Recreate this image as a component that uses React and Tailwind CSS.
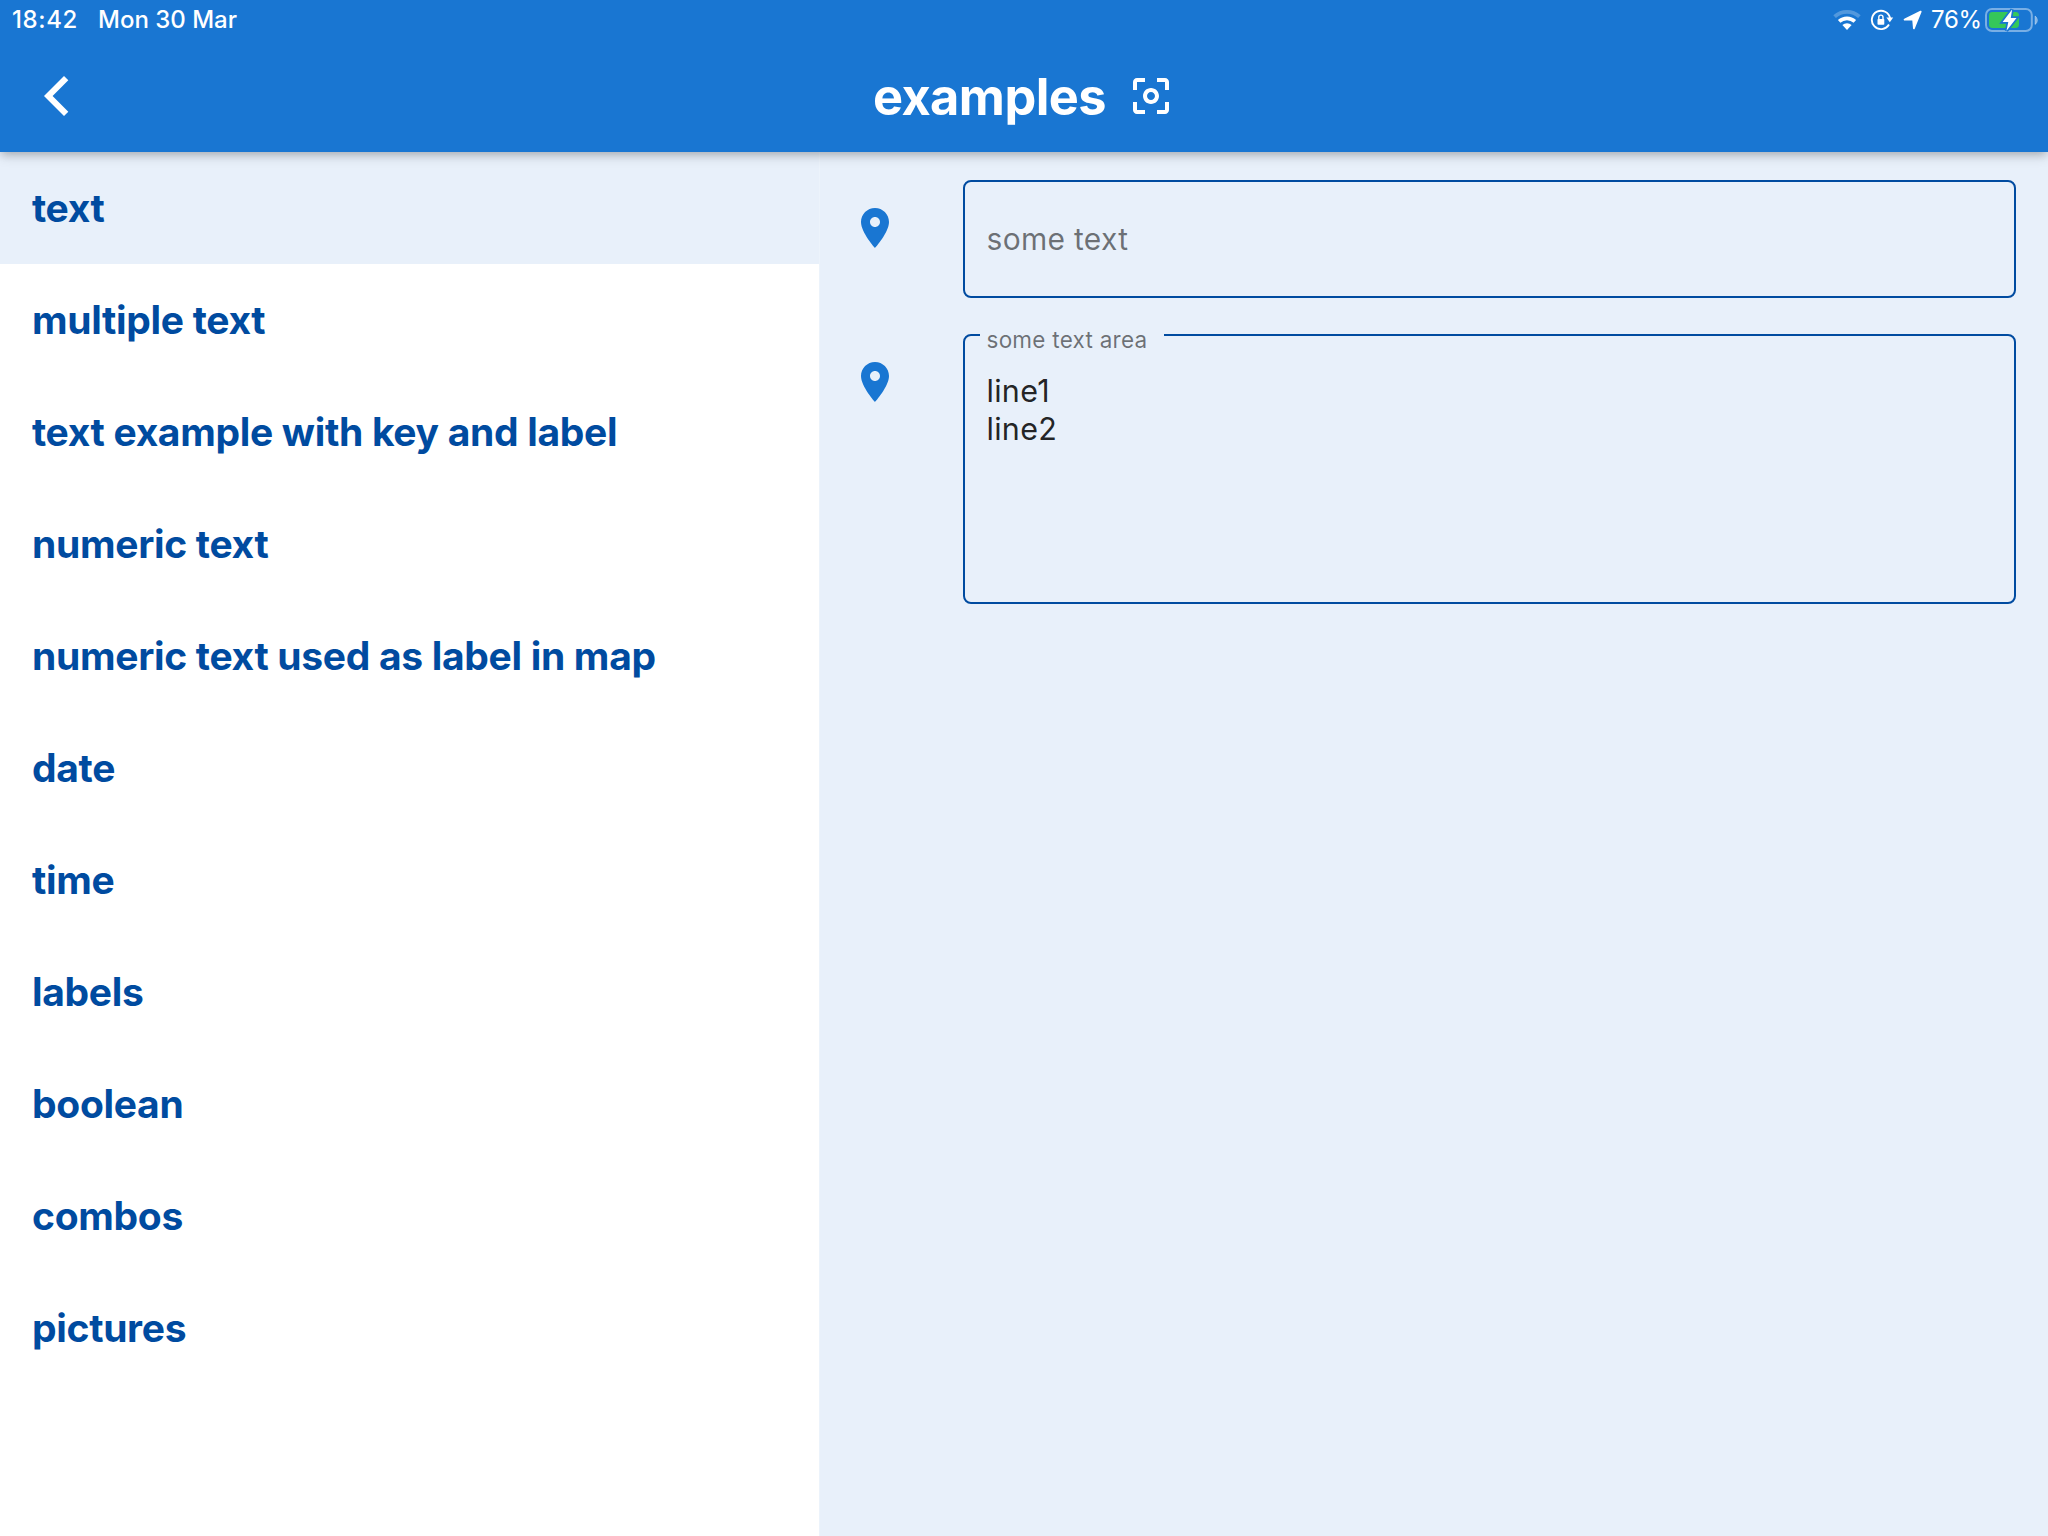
import React from "react";

const SECTIONS = [
  "text",
  "multiple text",
  "text example with key and label",
  "numeric text",
  "numeric text used as label in map",
  "date",
  "time",
  "labels",
  "boolean",
  "combos",
  "pictures",
];

function WifiIcon() {
  return (
    <svg className="h-[22px] w-7" viewBox="0 0 28 22" fill="none">
      <path d="M1.6 7.7A18.2 18.2 0 0 1 26.4 7.7" stroke="#fff" strokeOpacity="0.25" strokeWidth="3.8" />
      <path d="M6.16 12.4A11.5 11.5 0 0 1 21.84 12.4" stroke="#fff" strokeWidth="3.7" />
      <path d="M14 21L9.4 16.1A6.7 6.7 0 0 1 18.6 16.1Z" fill="#fff" />
    </svg>
  );
}

function RotationLockIcon() {
  return (
    <svg className="h-[22px] w-6" viewBox="0 0 24 22" fill="none">
      <path d="M20.1 9.4A9.2 9.2 0 1 0 18.97 15.6" stroke="#fff" strokeWidth="1.9" />
      <path d="M16.4 8.6H23.2L19.8 13.2Z" fill="#fff" />
      <rect x="7.5" y="10" width="6.8" height="5.8" rx="0.8" fill="#fff" />
      <path d="M8.8 10.4V8.2A2.1 2.1 0 0 1 13 8.2V10.4" stroke="#fff" strokeWidth="1.4" />
    </svg>
  );
}

function LocationArrowIcon() {
  return (
    <svg className="h-[22px] w-[19px]" viewBox="0 0 19 22">
      <path
        d="M17.7 2.6L1.6 10.5H10.1L10.9 19.4Z"
        fill="#fff"
        stroke="#fff"
        strokeWidth="1.8"
        strokeLinejoin="round"
      />
    </svg>
  );
}

function BatteryIcon() {
  return (
    <svg className="h-[26px] w-[53px]" viewBox="0 0 53 26" fill="none">
      <rect x="1" y="2" width="45.8" height="22" rx="6" stroke="#fff" strokeOpacity="0.42" strokeWidth="2" />
      <path d="M50 9A5 5 0 0 1 50 17.5Z" fill="#fff" fillOpacity="0.45" stroke="#fff" strokeOpacity="0.3" />
      <rect x="4" y="5" width="30" height="16" rx="3.4" fill="#35c759" />
      <path
        d="M27.1 2.6L17.6 15.1H23.3L21.5 23.8L31.5 11H25.8Z"
        fill="#fff"
        stroke="#1976d2"
        strokeWidth="3.4"
        paintOrder="stroke"
      />
    </svg>
  );
}

function PinIcon() {
  return (
    <svg className="mt-6 size-12 shrink-0" viewBox="0 0 24 24" fill="#1976d2">
      <path d="M12 2C8.13 2 5 5.13 5 9c0 5.25 7 13 7 13s7-7.75 7-13c0-3.87-3.13-7-7-7zm0 9.5c-1.38 0-2.5-1.12-2.5-2.5s1.12-2.5 2.5-2.5 2.5 1.12 2.5 2.5-1.12 2.5-2.5 2.5z" />
    </svg>
  );
}

function StatusBar() {
  return (
    <div className="flex h-10 items-center justify-between pl-3 pr-2.5 text-[24px] leading-none text-white">
      <div className="flex items-center">
        <span className="w-[86px] font-medium tracking-[0.6px]">18:42</span>
        <span className="font-medium">Mon 30 Mar</span>
      </div>
      <div className="flex items-center gap-[9px]">
        <WifiIcon />
        <RotationLockIcon />
        <LocationArrowIcon />
        <div className="flex items-center">
          <span className="w-[54px] tracking-[-0.3px]">76%</span>
          <BatteryIcon />
        </div>
      </div>
    </div>
  );
}

function AppBar() {
  return (
    <div className="grid h-28 grid-cols-[1fr_auto_1fr] items-center">
      <button className="ml-11 size-12" aria-label="Back">
        <svg className="size-12" viewBox="0 0 24 24" fill="#fff">
          <path d="M10 2L12.15 4.15 4.3 12 12.15 19.85 10 22 0 12z" />
        </svg>
      </button>
      <div className="flex items-center gap-[21px]">
        <h1 className="pt-0.5 text-[50.5px] leading-none font-bold tracking-[-0.55px] text-white">examples</h1>
        <svg className="size-12" viewBox="0 0 24 24" fill="#fff">
          <path d="M5 15H3v4c0 1.1.9 2 2 2h4v-2H5v-4zM5 5h4V3H5c-1.1 0-2 .9-2 2v4h2V5zm14-2h-4v2h4v4h2V5c0-1.1-.9-2-2-2zm0 16h-4v2h4c1.1 0 2-.9 2-2v-4h-2v4zM12 8c-2.21 0-4 1.79-4 4s1.79 4 4 4 4-1.79 4-4-1.79-4-4-4zm0 6c-1.1 0-2-.9-2-2s.9-2 2-2 2 .9 2 2-.9 2-2 2z" />
        </svg>
      </div>
      <div />
    </div>
  );
}

function SectionList() {
  return (
    <nav className="w-[819px] shrink-0 bg-white">
      {SECTIONS.map((name, i) => (
        <div
          key={name}
          className={`flex h-28 items-center pb-0.5 pl-8 text-[39px] leading-none font-bold tracking-[-0.31px] text-[#004ba0] ${
            i === 0 ? "bg-[#e8f0fa]" : ""
          }`}
        >
          {name}
        </div>
      ))}
    </nav>
  );
}

function Form() {
  return (
    <main className="flex flex-1 flex-col gap-9 border-l border-[#ecf3fb] bg-[#e8f0fa] pt-7 pr-8 pl-[31px]">
      <div className="flex gap-16">
        <PinIcon />
        <div className="flex h-[118px] flex-1 items-center rounded-lg border-2 border-[#004ba0] pl-[21.5px] text-[30px] leading-none tracking-[0.3px] text-black/54">
          some text
        </div>
      </div>
      <div className="flex gap-16">
        <PinIcon />
        <div className="relative h-[270px] flex-1 rounded-lg border-2 border-[#004ba0] pt-9 pl-[21.5px] text-[30.5px] leading-[38px] tracking-[0.3px] text-black/87">
          <span className="absolute -top-2 left-[15px] h-6 w-[184px] bg-[#e8f0fa] pl-[6.5px] text-[22.5px] leading-6 tracking-[0.25px] text-black/54">
            some text area
          </span>
          <p>line1</p>
          <p>line2</p>
        </div>
      </div>
    </main>
  );
}

export default function App() {
  return (
    <div className="flex h-[1536px] w-[2048px] flex-col overflow-hidden bg-white font-['Inter',sans-serif]">
      <header className="relative z-10 h-[152px] shrink-0 bg-[#1976d2] shadow-[0_4px_8px_-2px_rgba(0,0,0,0.18),0_4px_12px_0_rgba(0,0,0,0.14)]">
        <StatusBar />
        <AppBar />
      </header>
      <div className="flex flex-1">
        <SectionList />
        <Form />
      </div>
    </div>
  );
}
